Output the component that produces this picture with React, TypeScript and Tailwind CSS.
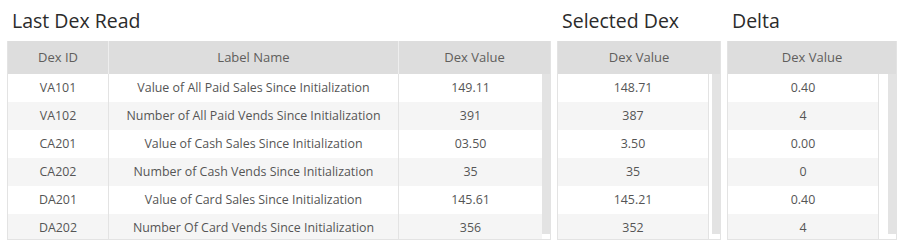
import React from "react";

type Row = { id: string; label: string; last: string; selected: string; delta: string };

const rows: Row[] = [
  { id: "VA101", label: "Value of All Paid Sales Since Initialization", last: "149.11", selected: "148.71", delta: "0.40" },
  { id: "VA102", label: "Number of All Paid Vends Since Initialization", last: "391", selected: "387", delta: "4" },
  { id: "CA201", label: "Value of Cash Sales Since Initialization", last: "03.50", selected: "3.50", delta: "0.00" },
  { id: "CA202", label: "Number of Cash Vends Since Initialization", last: "35", selected: "35", delta: "0" },
  { id: "DA201", label: "Value of Card Sales Since Initialization", last: "145.61", selected: "145.21", delta: "0.40" },
  { id: "DA202", label: "Number Of Card Vends Since Initialization", last: "356", selected: "352", delta: "4" },
];

function Scrollbar() {
  return (
    <div className="flex w-[8px] shrink-0 flex-col">
      <div className="h-[160px] bg-[#e3e3e3]" />
      <div className="flex-1 bg-white" />
    </div>
  );
}

function Title({ text }: { text: string }) {
  return (
    <div className="h-[41px] pl-[5px] pt-[7px] text-[19.5px] leading-[28px] text-[#2b2b2b]">
      {text}
    </div>
  );
}

function rowBg(i: number) {
  return i % 2 === 0 ? "bg-white" : "bg-[#f5f5f5]";
}

function LastDexTable() {
  return (
    <div className="flex w-[544px] flex-col">
      <Title text="Last Dex Read" />
      <div className="flex h-[199px] flex-col border border-t-0 border-[#e3e3e3]">
        <div className="flex h-[33px] bg-[#dddddd] text-[13px] text-[#605e5c]">
          <div className="flex w-[101px] items-center justify-center border-r border-[#eeeeee]">Dex ID</div>
          <div className="flex w-[290px] items-center justify-center border-r border-[#eeeeee]">Label Name</div>
          <div className="flex flex-1 items-center justify-center">Dex Value</div>
        </div>
        <div className="flex flex-1 overflow-hidden">
          <div className="flex flex-1 flex-col">
            {rows.map((r, i) => (
              <div key={r.id} className={`flex h-[28px] shrink-0 text-[12.4px] text-[#555555] ${rowBg(i)}`}>
                <div className="flex w-[101px] items-center justify-center border-r border-[#e3e3e3]">{r.id}</div>
                <div className="flex w-[290px] items-center justify-center border-r border-[#e3e3e3]">{r.label}</div>
                <div className="flex flex-1 items-center justify-center">{r.last}</div>
              </div>
            ))}
          </div>
          <Scrollbar />
        </div>
      </div>
    </div>
  );
}

function ValueTable({ title, width, colWidth, values }: { title: string; width: string; colWidth: string; values: string[] }) {
  return (
    <div className={`flex flex-col ${width}`}>
      <Title text={title} />
      <div className="flex h-[199px] flex-col border border-t-0 border-[#e3e3e3]">
        <div className="flex h-[33px] items-center justify-center bg-[#dddddd] text-[13px] text-[#605e5c]">
          Dex Value
        </div>
        <div className="flex flex-1 overflow-hidden">
          <div className={`flex flex-col border-r border-[#e3e3e3] ${colWidth}`}>
            {values.map((v, i) => (
              <div key={i} className={`flex h-[28px] shrink-0 items-center justify-center text-[12.4px] text-[#555555] ${rowBg(i)}`}>
                {v}
              </div>
            ))}
          </div>
          <div className="flex-1 bg-white" />
          <Scrollbar />
        </div>
      </div>
    </div>
  );
}

export default function App() {
  return (
    <div
      className="flex h-[248px] w-[921px] gap-[6px] bg-white pl-[7px]"
      style={{ fontFamily: '"Open Sans", "Noto Sans", sans-serif' }}
    >
      <LastDexTable />
      <ValueTable title="Selected Dex" width="w-[164px]" colWidth="w-[151px]" values={rows.map((r) => r.selected)} />
      <ValueTable title="Delta" width="w-[170px]" colWidth="w-[151px]" values={rows.map((r) => r.delta)} />
    </div>
  );
}
